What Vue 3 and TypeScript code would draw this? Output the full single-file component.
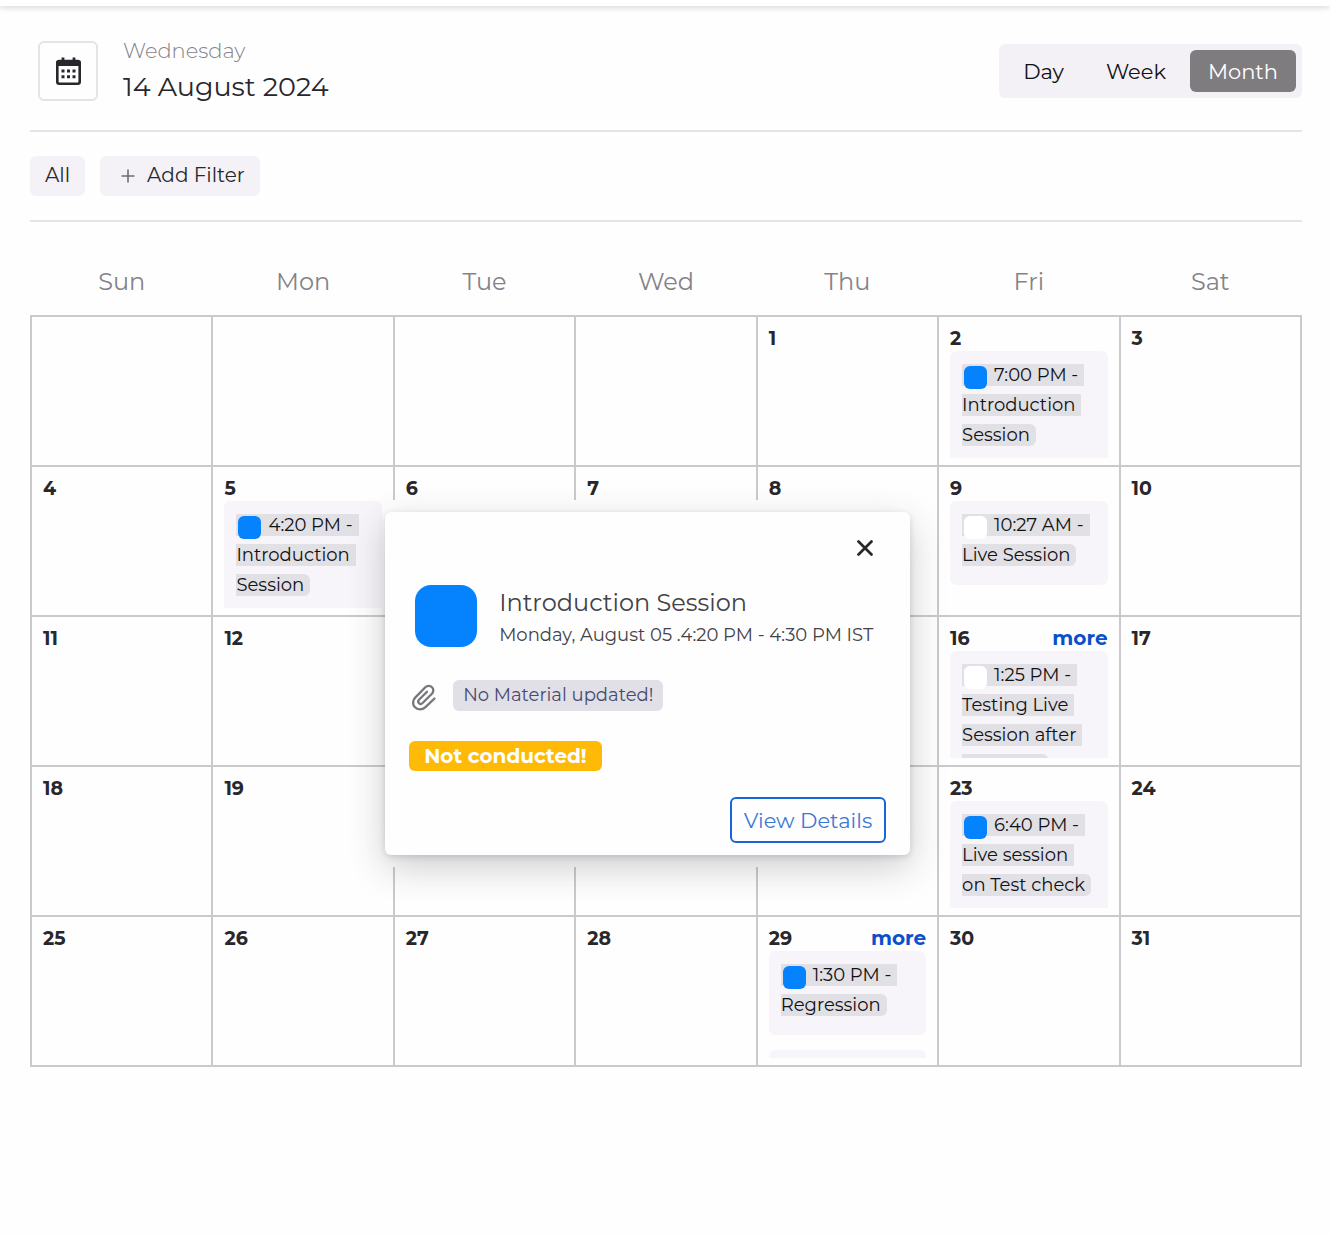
<script setup lang="ts">
import { ref } from 'vue'

interface Session {
  tone: 'blue' | 'white'
  lines: string[]
  continues?: boolean
}

interface Day {
  date: number | null
  more?: boolean
  sessions?: Session[]
}

const views = ['Day', 'Week', 'Month']
const activeView = ref('Month')
const popupOpen = ref(true)

// dates that lie behind the session popup while it is open
const covered = [13, 14, 15, 20, 21, 22]

const weekdays = ['Sun', 'Mon', 'Tue', 'Wed', 'Thu', 'Fri', 'Sat']

const details: Record<number, Omit<Day, 'date'>> = {
  2: { sessions: [{ tone: 'blue', lines: ['7:00 PM -', 'Introduction', 'Session'] }] },
  5: { sessions: [{ tone: 'blue', lines: ['4:20 PM -', 'Introduction', 'Session'] }] },
  9: { sessions: [{ tone: 'white', lines: ['10:27 AM -', 'Live Session'] }] },
  16: {
    more: true,
    sessions: [{ tone: 'white', lines: ['1:25 PM -', 'Testing Live', 'Session after'], continues: true }],
  },
  23: { sessions: [{ tone: 'blue', lines: ['6:40 PM -', 'Live session', 'on Test check'] }] },
  29: {
    more: true,
    sessions: [
      { tone: 'blue', lines: ['1:30 PM -', 'Regression'] },
      { tone: 'blue', lines: [] },
    ],
  },
}

// August 2024 starts on a Thursday
const firstWeekday = 4
const weeks: Day[][] = Array.from({ length: 5 }, (_, w) =>
  Array.from({ length: 7 }, (_, d) => {
    const date = w * 7 + d - firstWeekday + 1
    return date < 1 ? { date: null } : { date, ...details[date] }
  }),
)

function dateLabel(day: Day): string {
  if (day.date === null || (popupOpen.value && covered.includes(day.date))) return ''
  return String(day.date)
}
</script>

<template>
  <div class="page">
    <div class="topbar"></div>
    <main class="content">
      <header class="header">
        <button class="picker" type="button" aria-label="Pick a date">
          <svg width="26" height="28" viewBox="0 0 26 28" aria-hidden="true">
            <rect x="2.3" y="4" width="22.400" height="22.700" rx="2" fill="none" stroke="#28272c" stroke-width="2.600" />
            <path d="M1.500 4h24v5h-24z" fill="#28272c" />
            <path d="M8 0.500v5M19 0.500v5" stroke="#28272c" stroke-width="2.800" />
            <path d="M6.500 12.500h3v3h-3zM12 12.500h3v3h-3zM17.500 12.500h3v3h-3zM6.500 18.200h3v3h-3zM12 18.200h3v3h-3zM17.500 18.200h3v3h-3z" fill="#28272c" />
          </svg>
        </button>
        <div class="today">
          <span class="weekday">Wednesday</span>
          <h1 class="date">14 August 2024</h1>
        </div>
        <div class="switch">
          <button
            v-for="view in views"
            :key="view"
            type="button"
            class="view"
            :class="{ active: view === activeView }"
            @click="activeView = view"
          >{{ view }}</button>
        </div>
      </header>

      <div class="filters">
        <button type="button" class="chip">All</button>
        <button type="button" class="chip add">
          <svg width="14" height="14" viewBox="0 0 14 14" aria-hidden="true">
            <path d="M7 0.500v13M0.500 7h13" stroke="#6f6e73" stroke-width="1.600" />
          </svg>
          Add Filter
        </button>
      </div>

      <section class="calendar">
        <table class="grid">
          <thead>
            <tr>
              <th v-for="name in weekdays" :key="name" scope="col">{{ name }}</th>
            </tr>
          </thead>
          <tbody>
            <tr v-for="(week, w) in weeks" :key="w">
              <td v-for="(day, d) in week" :key="d">
                <div class="cell">
                  <div class="cell-head">
                    <span>{{ dateLabel(day) }}</span>
                    <a v-if="day.more" href="#" class="more">more</a>
                  </div>
                  <div v-if="day.sessions" class="sessions">
                    <div v-for="(session, s) in day.sessions" :key="s" class="session">
                      <div v-for="(line, l) in session.lines" :key="l" class="line">
                        <i v-if="l === 0" class="dot" :class="session.tone"></i>{{ line }}
                      </div>
                      <div v-if="session.continues" class="line rest"></div>
                    </div>
                  </div>
                </div>
              </td>
            </tr>
          </tbody>
        </table>

        <div v-if="popupOpen" class="popup-frame">
          <div class="popup" role="dialog" aria-labelledby="popup-title">
            <button class="close" type="button" aria-label="Close" @click="popupOpen = false">
              <svg width="16" height="16" viewBox="0 0 16 16" aria-hidden="true">
                <path d="M1.500 1.500l13 13M14.500 1.500l-13 13" stroke="#28272c" stroke-width="2.700" stroke-linecap="round" />
              </svg>
            </button>
            <div class="summary">
              <div class="swatch"></div>
              <div>
                <h2 id="popup-title" class="title">Introduction Session</h2>
                <p class="time">Monday, August 05 .4:20 PM - 4:30 PM IST</p>
              </div>
            </div>
            <div class="material">
              <svg width="26" height="28" viewBox="0 0 26 28" fill="none" stroke="#77767b" stroke-width="2.300" stroke-linecap="round" aria-hidden="true">
                <path d="M23.500 15.500L14.200 24.300C11 27.300 6.500 27 4 24.300C1.300 21.500 1.500 17.300 4.200 14.600L14.300 4.300C16.300 2.300 19.300 2.300 21 4.200C22.800 6 22.700 8.900 20.900 10.700L11.600 20C10.500 21.100 8.900 21.100 8 20.200C7 19.200 7.100 17.600 8.200 16.500L16 8.700" />
              </svg>
              <span class="tag">No Material updated!</span>
            </div>
            <span class="status">Not conducted!</span>
            <button type="button" class="details">View Details</button>
          </div>
        </div>
      </section>
    </main>
  </div>
</template>

<style>
body {
  margin: 0;
  background: #fefefe;
}
</style>

<style scoped>
.page {
  min-height: 100vh;
  font-family: Montserrat, Inter, "Liberation Sans", sans-serif;
  font-weight: 400;
  color: #28272c;
}
button {
  font: inherit;
  color: inherit;
  border: 0;
  padding: 0;
  cursor: pointer;
}
.topbar {
  height: 6px;
  background: #fff;
  box-shadow: 0 1px 6px #cfcdd2;
}
.content {
  padding: 0 28px 0 30px;
}
.header {
  display: flex;
  align-items: center;
  box-sizing: border-box;
  height: 126px;
  padding-top: 6px;
  border-bottom: 2px solid #e4e3e5;
}
.picker {
  display: flex;
  align-items: center;
  justify-content: center;
  box-sizing: border-box;
  width: 60px;
  height: 60px;
  margin: 0 25px 0 8px;
  background: #fefefe;
  border: 2px solid #e4e3e5;
  border-radius: 6px;
}
.today {
  flex: 1;
}
.weekday {
  display: block;
  font-size: 21px;
  line-height: 32px;
  font-weight: 300;
  color: #858388;
}
.date {
  margin: 0;
  font-size: 27px;
  line-height: 40px;
  font-weight: 400;
}
.switch {
  display: grid;
  grid-template-columns: 77px 96px 106px;
  gap: 6px;
  padding: 6px;
  background: #f3f1f5;
  border-radius: 6px;
}
.view {
  height: 42px;
  font-size: 21px;
  background: none;
  border-radius: 6px;
  color: #111014;
}
.view.active {
  background: #7f7c80;
  color: #fff;
}
.filters {
  display: flex;
  gap: 15px;
  padding: 24px 0;
  border-bottom: 2px solid #e4e3e5;
}
.chip {
  display: flex;
  align-items: center;
  height: 40px;
  padding: 0 15px 2px;
  box-sizing: border-box;
  font-size: 20px;
  background: #f4f2f6;
  border-radius: 6px;
}
.chip.add {
  gap: 12px;
  padding-left: 21px;
}
.chip svg {
  margin-top: 2px;
}
.calendar {
  position: relative;
  padding-top: 24px;
}
.grid {
  width: 100%;
  table-layout: fixed;
  border-collapse: collapse;
}
.grid th {
  height: 67px;
  padding: 2px 0 0;
  font-size: 24px;
  font-weight: 400;
  color: #858388;
}
.grid td {
  height: 148px;
  padding: 0;
  border: 2px solid #cac9cb;
  vertical-align: top;
}
.cell {
  box-sizing: border-box;
  height: 148px;
  padding: 9px 11px 7px;
}
.cell-head {
  display: flex;
  justify-content: space-between;
  font-size: 19px;
  line-height: 25px;
  font-weight: 700;
}
.more {
  font-size: 20px;
  color: #0a4fcb;
  text-decoration: none;
}
.sessions {
  height: 107px;
  overflow: hidden;
}
.session {
  display: flex;
  flex-direction: column;
  align-items: flex-start;
  gap: 8px;
  min-height: 83px;
  box-sizing: border-box;
  margin-bottom: 15px;
  padding: 13px 12px 19px;
  background: #f7f5f9;
  border-radius: 6px;
}
.line {
  display: flex;
  align-items: center;
  height: 22px;
  padding-right: 6px;
  font-size: 18px;
  line-height: 24px;
  white-space: nowrap;
  color: #111014;
  background: #e1e0e5;
}
.line:last-child {
  border-radius: 0 6px 6px 0;
}
.line.rest {
  width: 80px;
}
.dot {
  flex: none;
  width: 23px;
  height: 23px;
  margin: 4px 7px 0 2px;
  border-radius: 6px;
}
.dot.blue,
.swatch {
  background: #0583ff;
}
.dot.white {
  background: #fff;
}
.popup-frame {
  position: absolute;
  top: 278px;
  left: calc(28% - 1px);
  width: 525px;
  padding: 12px 0;
  background: #fefefe;
  z-index: 1;
}
.popup {
  display: flex;
  flex-direction: column;
  align-items: flex-start;
  box-sizing: border-box;
  height: 343px;
  padding: 24px 24px 12px;
  background: #fefefe;
  border-radius: 6px;
  box-shadow: 0 12px 36px rgba(50, 44, 60, 0.24), 0 2px 6px rgba(50, 44, 60, 0.16);
}
.close {
  display: flex;
  align-items: center;
  justify-content: center;
  align-self: flex-end;
  width: 42px;
  height: 24px;
  background: none;
}
.summary {
  display: flex;
  gap: 22px;
  margin: 25px 0 0 6px;
  white-space: nowrap;
}
.swatch {
  flex: none;
  width: 62px;
  height: 62px;
  border-radius: 16px;
}
.title {
  margin: 2px 0 0;
  font-size: 24px;
  line-height: 32px;
  font-weight: 400;
  color: #434247;
}
.time {
  margin: 0;
  font-size: 18px;
  line-height: 32px;
  color: #434247;
}
.material {
  display: flex;
  align-items: center;
  gap: 16px;
  margin: 29px 0 0 2px;
}
.material svg {
  margin-top: 2px;
}
.tag {
  padding: 0 10px;
  font-size: 18px;
  line-height: 31px;
  color: #474b73;
  background: #e1e0e6;
  border-radius: 6px;
}
.status {
  margin-top: 30px;
  padding: 0 15px;
  font-size: 20px;
  line-height: 30px;
  font-weight: 700;
  color: #fff;
  background: #ffba08;
  border-radius: 6px;
}
.details {
  align-self: flex-end;
  box-sizing: border-box;
  height: 46px;
  margin-top: auto;
  padding: 0 12px;
  font-size: 21px;
  color: #3c78d8;
  background: #fefefe;
  border: 2px solid #1766d9;
  border-radius: 6px;
}
</style>
